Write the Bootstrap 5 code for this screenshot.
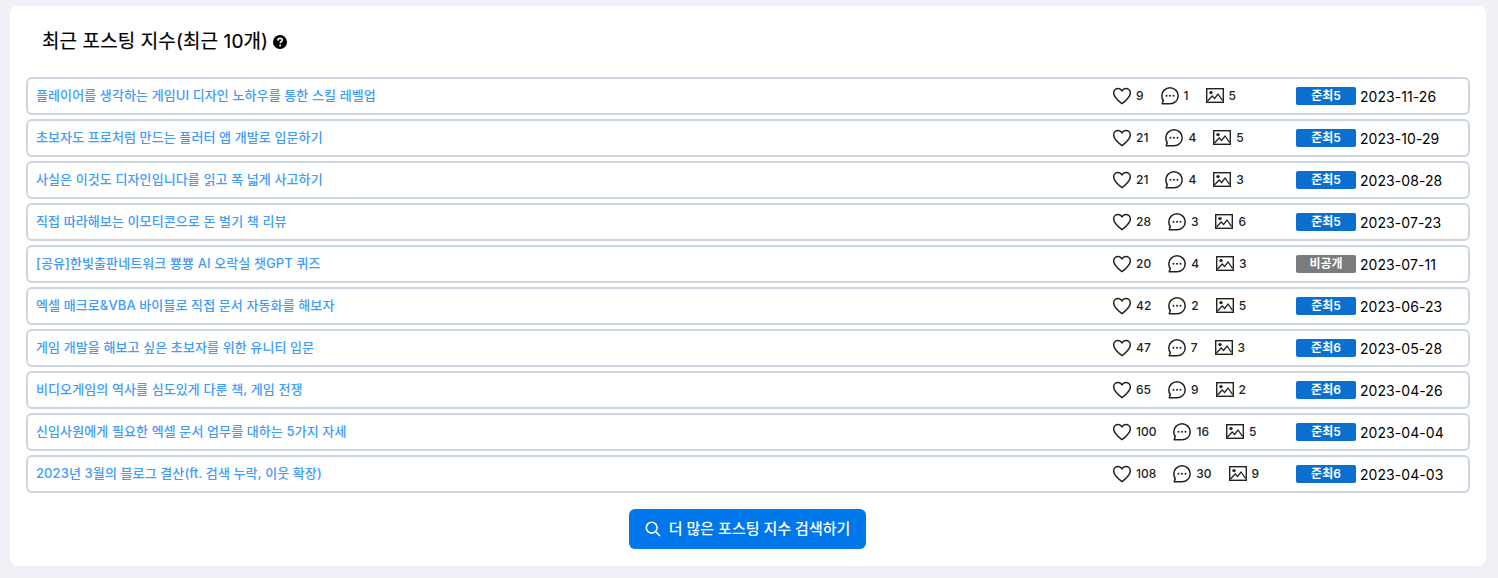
<!DOCTYPE html>
<html lang="ko">
<head>
    <meta charset="UTF-8">
    <meta name="viewport" content="width=device-width, initial-scale=1">
    <title>최근 포스팅 지수</title>
    <link href="https://cdn.jsdelivr.net/npm/bootstrap@5.3.0/dist/css/bootstrap.min.css" rel="stylesheet">
    <style>
        body {
            background-color: #f0f1f6;
            font-family: Inter, "Noto Sans CJK KR", sans-serif;
            color: #000;
        }
        .page-wrap { padding: 6px 12px 12px 10px; }
        .index-box {
            background-color: #fff;
            border-radius: 8px;
            height: 560px;
            padding: 0 16px;
        }
        .index-title {
            font-size: 19px;
            font-weight: 400;
            line-height: 26px;
            padding: 23px 0 0 16px;
            height: 71px;
            margin: 0;
            letter-spacing: .1px;
            -webkit-text-stroke: .2px #000;
        }
        .help-icon { margin: 6px 0 0 5px; }
        .post-row {
            height: 38px;
            margin-bottom: 4px;
            border: 2px solid #cdd5e0;
            border-radius: 6px;
            padding-left: 8px;
        }
        .post-link {
            color: #3f9bff;
            font-size: 13px;
            font-weight: 500;
            letter-spacing: .1px;
            text-decoration: none;
        }
        .post-stats { width: 183px; font-size: 12px; font-weight: 500; color: #222; }
        .stat-num { margin-left: 5px; }
        .stat-gap { margin-right: 17px; }
        .pic-icon { margin-bottom: 2px; }
        .grade-tag {
            width: 60px;
            height: 18px;
            line-height: 18px;
            font-size: 12px;
            font-weight: 600;
            border-radius: 2px;
            color: #fff;
            text-align: center;
            background-color: #0b6fd0;
        }
        .grade-tag.off { background-color: #7b7b7b; }
        .post-date { width: 108px; margin-left: 4px; font-size: 14px; letter-spacing: .06px; }
        .more-btn {
            background-color: #0078ec;
            border: none;
            border-radius: 6px;
            color: #fff;
            font-size: 15px;
            font-weight: 500;
            width: 237px;
            height: 40px;
            margin: 12px 1px 0 0;
        }
        .more-btn:hover { background-color: #0069d0; color: #fff; }
    </style>
</head>
<body>
    <svg class="d-none">
        <symbol id="i-heart" viewBox="0 0 18 18">
            <path d="M9 16.6C6.4 14.5.7 10.6.7 6 .7 3.4 2.7 1.5 5 1.5 6.7 1.5 8.2 2.4 9 4 9.8 2.4 11.3 1.5 13 1.5 15.3 1.5 17.3 3.4 17.3 6 17.3 10.6 11.6 14.5 9 16.6Z" fill="none" stroke="#222" stroke-width="1.5" stroke-linejoin="round"/>
        </symbol>
        <symbol id="i-comment" viewBox="0 0 18 18">
            <path d="M9 .8C13.5.8 17.2 4.4 17.2 8.8S13.5 16.8 9 16.8H1.2L2.3 13.5C1.3 12.2.8 10.6.8 8.8.8 4.4 4.5.8 9 .8Z" fill="none" stroke="#222" stroke-width="1.5" stroke-linejoin="round"/>
            <circle cx="5.5" cy="8.8" r="1" fill="#222"/><circle cx="9" cy="8.8" r="1" fill="#222"/><circle cx="12.5" cy="8.8" r="1" fill="#222"/>
        </symbol>
        <symbol id="i-image" viewBox="0 0 18 15">
            <rect x="0.7" y="0.7" width="16.6" height="13.6" fill="none" stroke="#222" stroke-width="1.4"/>
            <circle cx="5" cy="4.6" r="1.7" fill="#222"/>
            <path d="M1.5 13 6.2 8 8.6 10.4 12 6 16.5 12.4" fill="none" stroke="#222" stroke-width="1.3"/>
        </symbol>
    </svg>

    <div class="page-wrap">
        <div class="index-box">
            <h2 class="index-title d-flex align-items-start">
                최근 포스팅 지수(최근 10개)
                <svg class="help-icon" width="14" height="14" viewBox="0 0 14 14">
                    <circle cx="7" cy="7" r="7" fill="#000"/>
                    <path d="M4.9 5.4C4.9 4.2 5.8 3.4 7.1 3.4S9.2 4.2 9.2 5.2C9.2 6.6 7.2 6.7 7.2 8.2" fill="none" stroke="#fff" stroke-width="1.6"/>
                    <circle cx="7.2" cy="10.4" r="1" fill="#fff"/>
                </svg>
            </h2>
            <div id="postList"></div>
            <div class="text-center">
                <button class="btn more-btn d-inline-flex align-items-center justify-content-center gap-2">
                    <svg width="16" height="16" viewBox="0 0 16 16"><circle cx="6.7" cy="6.7" r="5.4" fill="none" stroke="#fff" stroke-width="1.6"/><path d="M10.7 10.7 15 15" stroke="#fff" stroke-width="1.6"/></svg>
                    더 많은 포스팅 지수 검색하기
                </button>
            </div>
        </div>
    </div>

    <script src="https://cdn.jsdelivr.net/npm/bootstrap@5.3.0/dist/js/bootstrap.bundle.min.js"></script>
    <script>
        const posts = [
            ["플레이어를 생각하는 게임UI 디자인 노하우를 통한 스킬 레벨업", 9, 1, 5, "준최5", "2023-11-26"],
            ["초보자도 프로처럼 만드는 플러터 앱 개발로 입문하기", 21, 4, 5, "준최5", "2023-10-29"],
            ["사실은 이것도 디자인입니다를 읽고 폭 넓게 사고하기", 21, 4, 3, "준최5", "2023-08-28"],
            ["직접 따라해보는 이모티콘으로 돈 벌기 책 리뷰", 28, 3, 6, "준최5", "2023-07-23"],
            ["[공유]한빛출판네트워크 뿅뿅 AI 오락실 챗GPT 퀴즈", 20, 4, 3, "비공개", "2023-07-11"],
            ["엑셀 매크로&VBA 바이블로 직접 문서 자동화를 해보자", 42, 2, 5, "준최5", "2023-06-23"],
            ["게임 개발을 해보고 싶은 초보자를 위한 유니티 입문", 47, 7, 3, "준최6", "2023-05-28"],
            ["비디오게임의 역사를 심도있게 다룬 책, 게임 전쟁", 65, 9, 2, "준최6", "2023-04-26"],
            ["신입사원에게 필요한 엑셀 문서 업무를 대하는 5가지 자세", 100, 16, 5, "준최5", "2023-04-04"],
            ["2023년 3월의 블로그 결산(ft. 검색 누락, 이웃 확장)", 108, 30, 9, "준최6", "2023-04-03"]
        ];

        document.getElementById("postList").innerHTML = posts.map(p => `
            <div class="post-row d-flex align-items-center">
                <a href="#" class="post-link flex-grow-1">${p[0].replace("&", "&amp;")}</a>
                <div class="post-stats d-flex align-items-center">
                    <svg width="18" height="18"><use href="#i-heart"/></svg><span class="stat-num stat-gap">${p[1]}</span>
                    <svg width="18" height="18"><use href="#i-comment"/></svg><span class="stat-num stat-gap">${p[2]}</span>
                    <svg class="pic-icon" width="18" height="15"><use href="#i-image"/></svg><span class="stat-num">${p[3]}</span>
                </div>
                <div class="grade-tag ${p[4] === "비공개" ? "off" : ""}">${p[4]}</div>
                <div class="post-date">${p[5]}</div>
            </div>`).join("");
    </script>
</body>
</html>
